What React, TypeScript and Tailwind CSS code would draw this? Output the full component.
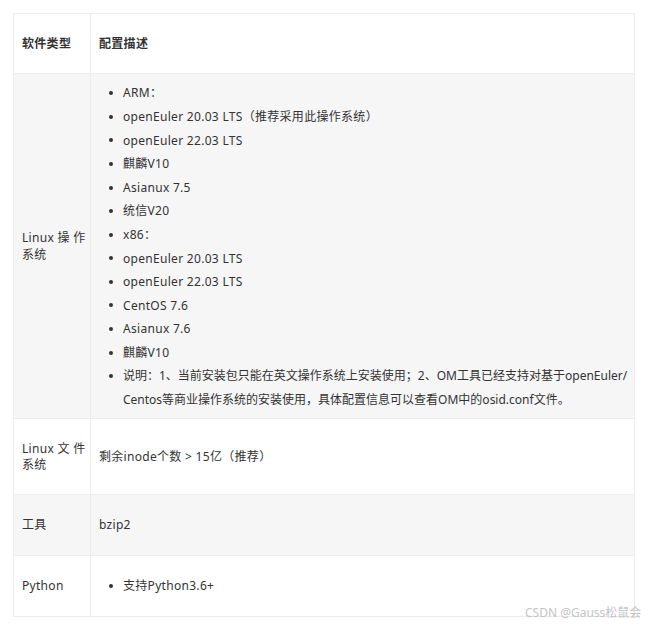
import React from "react";

const osItems = [
  "ARM：",
  "openEuler 20.03 LTS（推荐采用此操作系统）",
  "openEuler 22.03 LTS",
  "麒麟V10",
  "Asianux 7.5",
  "统信V20",
  "x86：",
  "openEuler 20.03 LTS",
  "openEuler 22.03 LTS",
  "CentOS 7.6",
  "Asianux 7.6",
  "麒麟V10",
];

const font = { fontFamily: '"Noto Sans", "Noto Sans CJK SC", sans-serif' };

const Bullet = ({ children }: { children: React.ReactNode }) => (
  <li className="flex items-start">
    <span className="w-[24px] h-[23.6px] shrink-0 flex items-center pl-[10px]">
      <span className="w-[4px] h-[4px] rounded-full bg-[#333]" />
    </span>
    <span className="leading-[23.6px]">{children}</span>
  </li>
);

const cell = "border border-[#ededed] px-[8px]";

const App = () => {
  return (
    <div className="relative w-[653px] h-[626px] bg-white text-[12px] text-[#333] tracking-[0.3px]" style={font}>
      <div className="pt-[13px] pl-[13px]">
        <table className="w-[622px] table-fixed border-collapse">
          <colgroup>
            <col className="w-[77px]" />
            <col />
          </colgroup>
          <tbody>
            <tr className="h-[60px]">
              <td className={`${cell} font-bold whitespace-nowrap`}>软件类型</td>
              <td className={`${cell} font-bold`}>配置描述</td>
            </tr>
            <tr className="h-[345px] bg-[#f6f6f6]">
              <td className={`${cell} leading-[17px] whitespace-nowrap`}>
                Linux 操 作<br />系统
              </td>
              <td className={`${cell} pt-[6px] pb-[5px]`}>
                <ul>
                  {osItems.map((item, i) => (
                    <Bullet key={i}>{item}</Bullet>
                  ))}
                  <Bullet>
                    <span className="whitespace-nowrap tracking-normal">说明：1、当前安装包只能在英文操作系统上安装使用；2、OM工具已经支持对基于openEuler/</span>
                    <br />
                    <span className="whitespace-nowrap tracking-normal">Centos等商业操作系统的安装使用，具体配置信息可以查看OM中的osid.conf文件。</span>
                  </Bullet>
                </ul>
              </td>
            </tr>
            <tr className="h-[76px]">
              <td className={`${cell} leading-[16px] whitespace-nowrap`}>
                Linux 文 件<br />系统
              </td>
              <td className={cell}>剩余inode个数 &gt; 15亿（推荐）</td>
            </tr>
            <tr className="h-[61px] bg-[#f6f6f6]">
              <td className={cell}>工具</td>
              <td className={cell}>bzip2</td>
            </tr>
            <tr className="h-[61px]">
              <td className={cell}>Python</td>
              <td className={cell}>
                <ul>
                  <Bullet>支持Python3.6+</Bullet>
                </ul>
              </td>
            </tr>
          </tbody>
        </table>
      </div>
      <div className="absolute left-[525px] top-[604px] text-[12px] tracking-normal text-[#c4c4c4]">
        CSDN @Gauss松鼠会
      </div>
    </div>
  );
};

export default App;
